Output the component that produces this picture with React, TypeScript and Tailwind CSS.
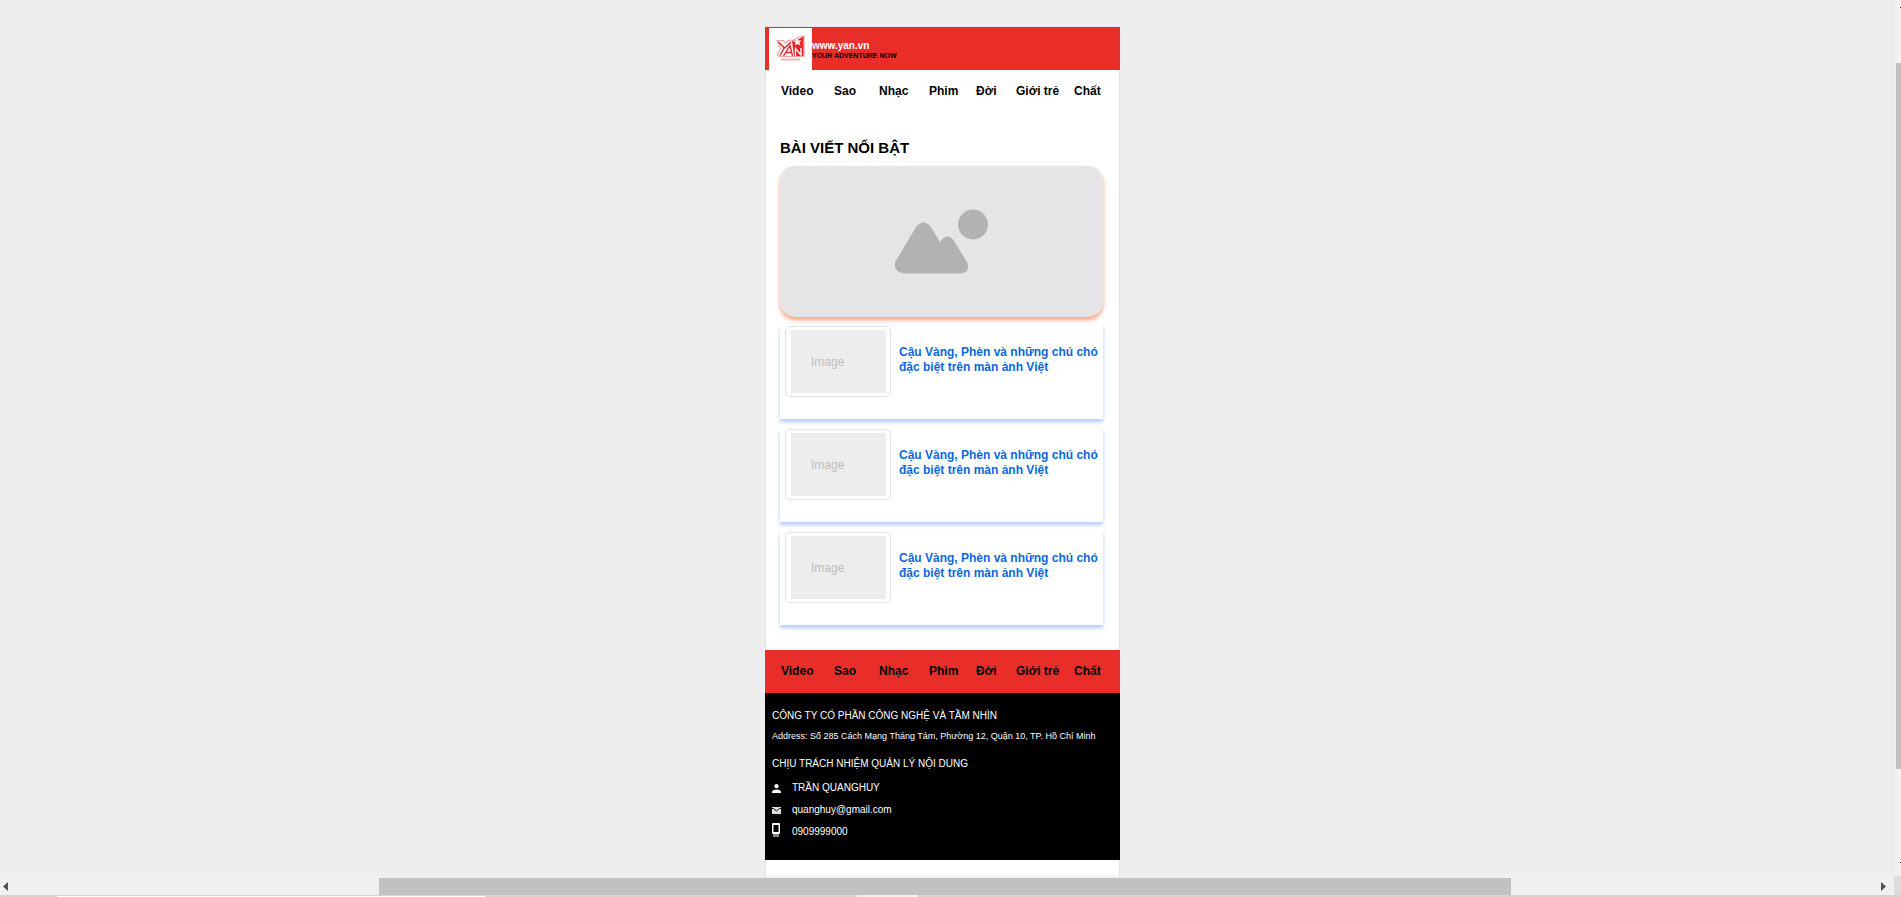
const sections = ['Video', 'Sao', 'Nhạc', 'Phim', 'Đời', 'Giới trẻ', 'Chất'];

const articles = [1, 2, 3].map((id) => ({
  id,
  title: 'Cậu Vàng, Phèn và những chú chó đặc biệt trên màn ảnh Việt',
}));

function SectionNav({ label }: { label: string }) {
  return (
    <nav
      aria-label={label}
      className="grid h-[42px] grid-cols-[53fr_45fr_50fr_47fr_40fr_58fr_30fr] items-center px-4 text-[12px] font-bold text-black"
    >
      {sections.map((name) => (
        <a key={name} href="#" className="whitespace-nowrap">
          {name}
        </a>
      ))}
    </nav>
  );
}

function Logo() {
  return (
    <svg viewBox="0 0 43 42" className="h-[42px] w-[43px] bg-white" aria-label="YAN">
      <path
        d="M8 12.500 L14 12.500 L16.500 15 L19 12.500 L25 12 L30 9 L35 8 L35 28.500 L10 28.500 L8.500 26 L11.500 20.500 Z"
        fill="#fff"
        stroke="#f3a0a0"
        strokeWidth="1.200"
      />
      <path d="M23 13 L28 12 L34.500 8.500 V28 H25 Z" fill="#e4262a" />
      <path
        d="M9.500 14 L15.500 20 L22 14 M15.500 19.500 L11 27.500"
        fill="none"
        stroke="#e4262a"
        strokeWidth="1.500"
      />
      <path
        d="M14.500 28 L21 17.500 L23.500 28 M17 24.500 H22.500"
        fill="none"
        stroke="#e4262a"
        strokeWidth="1.400"
      />
      <path d="M26.500 28 V20.500 L32 27 V20" fill="none" stroke="#fff" strokeWidth="1.300" />
      <path
        d="M28.500 10 L29.500 12.500 L32.500 12.500 L30.300 14.500 L31.500 17.500 L28.500 16 L26 17.500 L26.600 14.700 L24.500 13 L27.300 12.500 Z"
        fill="#fff"
      />
      <path d="M12 31.500 H31" stroke="#f3a5a5" strokeWidth="1.800" strokeDasharray="2 0.5" />
    </svg>
  );
}

function Hero() {
  return (
    <a
      href="#"
      aria-label="Bài viết nổi bật"
      className="block rounded-[15px] bg-[#e5e5e5] shadow-[0_3px_4px_#ff9f7f]"
    >
      <svg viewBox="0 0 323 151" className="block w-full" fill="#b2b2b2">
        <circle cx="193" cy="58.500" r="15" />
        <path d="M136 61 Q143.500 52 151 61 L160 76 Q167 66.500 173 73.500 L187 96 Q190.500 106.500 181 107.500 L124 107.500 Q112.500 105 115.500 95.500 Z" />
      </svg>
    </a>
  );
}

function ArticleCard({ title }: { title: string }) {
  return (
    <article className="flex h-[95px] items-start gap-2 bg-white pl-[5px] shadow-[0_3px_4px_#b4c9ff]">
      <div className="mt-[2px] h-[71px] w-[106px] shrink-0 rounded-[5px] border border-[#e2e2e2] py-[3px] pl-[5px] pr-1">
        <div className="flex h-full items-center bg-[#ededed] pl-5 text-[12px] text-[#bdbdbd]">
          Image
        </div>
      </div>
      <h3 className="mt-[21px] text-[12px] font-bold leading-[15px] text-[#0b68e0]">
        <a href="#">{title}</a>
      </h3>
    </article>
  );
}

function Footer() {
  return (
    <footer>
      <div className="bg-[#e92e29] pb-px">
        <SectionNav label="Chuyên mục cuối trang" />
      </div>
      <div className="h-[167px] bg-black px-[7px] pt-[15px] text-[10px] leading-4 text-white">
        <p>CÔNG TY CỔ PHẦN CÔNG NGHỆ VÀ TẦM NHÌN</p>
        <p className="mt-1 whitespace-nowrap text-[9px]">
          Address: Số 285 Cách Mạng Tháng Tám, Phường 12, Quận 10, TP. Hồ Chí Minh
        </p>
        <p className="mt-3">CHỊU TRÁCH NHIỆM QUẢN LÝ NỘI DUNG</p>
        <ul className="mt-2 flex flex-col gap-[6px]">
          <li className="flex items-center gap-[11px]">
            <svg viewBox="0 0 9 9" className="h-[9px] w-[9px]" fill="#fff">
              <circle cx="4.500" cy="2.200" r="2.100" />
              <path d="M0 9 V7.500 Q1 5.500 4.500 5.500 T9 7.500 V9 Z" />
            </svg>
            TRẦN QUANGHUY
          </li>
          <li className="flex items-center gap-[11px]">
            <svg viewBox="0 0 9 7" className="h-[7px] w-[9px]">
              <rect width="9" height="7" fill="#ddd" />
              <path d="M0 1.500 H1.500 L4.500 4 L7.500 1.500 H9" fill="none" stroke="#111" strokeWidth="1" />
            </svg>
            <a href="mailto:quanghuy@gmail.com">quanghuy@gmail.com</a>
          </li>
          <li className="flex items-center gap-3">
            <svg viewBox="0 0 8 14" className="-mt-1 h-[14px] w-2">
              <rect width="8" height="11" rx="1" fill="#fff" />
              <rect x="1.500" y="2" width="5" height="7" fill="#000" />
              <rect x="1" y="11" width="6" height="3" fill="#888" />
            </svg>
            <a href="tel:0909999000">0909999000</a>
          </li>
        </ul>
      </div>
    </footer>
  );
}

function VerticalScrollbar() {
  return (
    <div className="flex w-[7px] shrink-0 flex-col bg-[#f0f0f0] pl-[2px]" aria-hidden="true">
      <div className="flex h-[63px] justify-end pt-[7px]">
        <span className="h-px w-px bg-[#505050]" />
      </div>
      <div className="grow bg-[#c1c1c1]" />
      <div className="flex h-[107px] items-end justify-end pb-[13px]">
        <span className="h-px w-px bg-[#505050]" />
      </div>
    </div>
  );
}

function HorizontalScrollbar() {
  return (
    <div className="flex h-[19px] shrink-0" aria-hidden="true">
      <div className="flex grow items-stretch bg-[#f0f0f0] pt-[2px]">
        <div className="flex w-[20%] items-center pl-[3px]">
          <svg viewBox="0 0 5 9" className="h-[9px] w-[5px]" fill="#505050">
            <path d="M5 0 V9 L0 4.500 Z" />
          </svg>
        </div>
        <div className="grow bg-[#c1c1c1]" />
        <div className="flex w-[20.2%] items-center justify-end pr-2">
          <svg viewBox="0 0 5 9" className="h-[9px] w-[5px]" fill="#505050">
            <path d="M0 0 V9 L5 4.500 Z" />
          </svg>
        </div>
      </div>
      <div className="w-[7px] bg-[#dcdcdc]" />
    </div>
  );
}

export default function App() {
  return (
    <div className="flex h-screen flex-col overflow-hidden bg-[#eeeeee] font-['Liberation_Sans',Arial,sans-serif]">
      <div className="flex min-h-0 grow">
        <main className="flex min-w-0 grow justify-center overflow-hidden pr-[9px] pt-[26px]">
          <div className="h-full min-h-[870px] w-full max-w-[355px] border border-[#e3e3e3] bg-white">
            <header className="-mx-px flex h-[43px] items-center bg-[#e92e29] pl-1">
              <Logo />
              <div className="flex flex-col pt-1">
                <a href="#" className="text-[10px] font-bold leading-[10px] text-white">
                  www.yan.vn
                </a>
                <span className="text-[7px] font-bold leading-[10px] text-black">YOUR ADVENTURE NOW</span>
              </div>
            </header>
            <div className="-mx-px">
              <SectionNav label="Chuyên mục" />
            </div>
            <section className="pl-[14px] pr-4 pt-[26px]">
              <h2 className="pb-2 text-[15px] font-bold leading-5 text-black">BÀI VIẾT NỔI BẬT</h2>
              <Hero />
              <div className="flex flex-col gap-2 pb-[25px] pt-[7px]">
                {articles.map((article) => (
                  <ArticleCard key={article.id} title={article.title} />
                ))}
              </div>
            </section>
            <div className="-mx-px">
              <Footer />
            </div>
          </div>
        </main>
        <VerticalScrollbar />
      </div>
      <HorizontalScrollbar />
      <div className="flex h-[2px] shrink-0 bg-[#d4d4d4]" aria-hidden="true">
        <div className="w-[3%]" />
        <div className="mt-px w-[22.5%] bg-white" />
        <div className="w-[19.6%]" />
        <div className="w-[3.2%] bg-[#f0f0f0]" />
      </div>
    </div>
  );
}
